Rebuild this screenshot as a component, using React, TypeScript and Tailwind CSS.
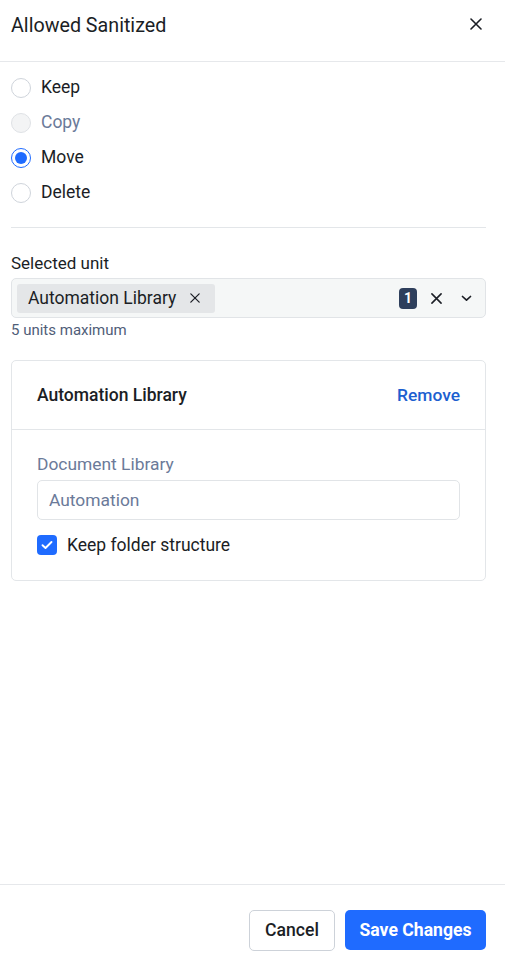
import React from "react";

const font = { fontFamily: "Roboto, 'Noto Sans', Arial, sans-serif" };

function Cross({ size = 12, stroke = 1.6 }: { size?: number; stroke?: number }) {
  return (
    <svg width={size} height={size} viewBox="0 0 12 12" fill="none">
      <path d="M1 1L11 11M11 1L1 11" stroke="currentColor" strokeWidth={stroke} strokeLinecap="round" />
    </svg>
  );
}

function Radio({ label, state }: { label: string; state: "off" | "on" | "disabled" }) {
  return (
    <label className="flex h-[35px] items-center gap-[10px]">
      {state === "on" ? (
        <span className="flex h-[20px] w-[20px] items-center justify-center rounded-full border-[1.5px] border-[#1f6bff] bg-white">
          <span className="h-[12px] w-[12px] rounded-full bg-[#1f6bff]" />
        </span>
      ) : state === "disabled" ? (
        <span className="h-[20px] w-[20px] rounded-full border border-[#dfe2e6] bg-[#f3f4f5]" />
      ) : (
        <span className="h-[20px] w-[20px] rounded-full border border-[#cfd4db] bg-white" />
      )}
      <span className={`text-[17.5px] ${state === "disabled" ? "text-[#6b7a99]" : "text-[#1b1e25]"}`}>{label}</span>
    </label>
  );
}

export default function App() {
  return (
    <div className="flex h-[970px] w-[505px] flex-col bg-white text-[#1b1e25]" style={font}>
      <div className="flex h-[62px] shrink-0 items-start justify-between border-b border-[#e6e8eb] pl-[11px] pr-[19px] pt-[11px]">
        <h1 className="mt-[2px] text-[19.7px] leading-[26px] font-normal">Allowed Sanitized</h1>
        <button className="mr-[4px] mt-[7px] text-[#1b1e25]">
          <Cross size={12} stroke={1.6} />
        </button>
      </div>

      <div className="flex-1 pl-[11px] pr-[19px] pt-[8px]">
        <div className="flex flex-col">
          <Radio label="Keep" state="off" />
          <Radio label="Copy" state="disabled" />
          <Radio label="Move" state="on" />
          <Radio label="Delete" state="off" />
        </div>

        <div className="mt-[17px] border-t border-[#e3e6e9]" />

        <div className="mt-[23px] text-[17px] leading-[24px]">Selected unit</div>
        <div className="mt-[3px] flex h-[40px] items-center rounded-[5px] border border-[#e1e4e7] bg-[#f5f7f7] pl-[5px] pr-[13px]">
          <span className="flex h-[29px] items-center gap-[14px] rounded-[3px] bg-[#e4e6e8] pl-[11px] pr-[15px] text-[17.5px]">
            Automation Library
            <Cross size={10} stroke={1.5} />
          </span>
          <span className="ml-auto flex h-[21px] w-[18px] items-center justify-center rounded-[4px] bg-[#2e3f5c] text-[14px] font-bold text-white">1</span>
          <span className="ml-[14px] text-[#1b1e25]">
            <Cross size={11} stroke={1.7} />
          </span>
          <span className="ml-[19px] text-[#1b1e25]">
            <svg width="11" height="7" viewBox="0 0 11 7" fill="none">
              <path d="M1.5 1.5L5.5 5.2L9.5 1.5" stroke="currentColor" strokeWidth="1.7" strokeLinecap="round" strokeLinejoin="round" />
            </svg>
          </span>
        </div>
        <div className="mt-[3px] text-[15px] leading-[18px] text-[#4f5d78]">5 units maximum</div>

        <div className="mt-[21px] rounded-[5px] border border-[#e3e6e9]">
          <div className="flex h-[69px] items-center justify-between border-b border-[#e3e6e9] px-[25px]">
            <span className="text-[17.5px] font-medium">Automation Library</span>
            <span className="text-[17.4px] font-medium text-[#1d5fd0]">Remove</span>
          </div>
          <div className="px-[25px] pb-[25px] pt-[22px]">
            <div className="text-[17.4px] leading-[24px] text-[#6b7a99]">Document Library</div>
            <div className="mt-[4px] flex h-[40px] items-center rounded-[5px] border border-[#e1e4e7] px-[11px] pt-[1px] text-[17.4px] text-[#6b7a99]">
              Automation
            </div>
            <div className="mt-[15px] flex h-[20px] items-center gap-[10px]">
              <span className="flex h-[20px] w-[20px] items-center justify-center rounded-[4px] bg-[#1f6bff]">
                <svg width="12" height="10" viewBox="0 0 12 10" fill="none">
                  <path d="M1.5 5.2L4.5 8L10.5 2" stroke="white" strokeWidth="1.9" strokeLinecap="round" strokeLinejoin="round" />
                </svg>
              </span>
              <span className="text-[17.5px] leading-[20px]">Keep folder structure</span>
            </div>
          </div>
        </div>
      </div>

      <div className="flex h-[86px] shrink-0 items-start justify-end gap-[10px] border-t border-[#e6e8eb] pl-[11px] pr-[19px] pt-[25px]">
        <button className="h-[41px] w-[86px] rounded-[5px] border border-[#cdd2d9] bg-white text-[17.6px] font-medium text-[#1b1e25]">
          Cancel
        </button>
        <button className="h-[40px] w-[141px] rounded-[5px] bg-[#1f6bff] text-[17.6px] font-bold text-white">
          Save Changes
        </button>
      </div>
    </div>
  );
}
